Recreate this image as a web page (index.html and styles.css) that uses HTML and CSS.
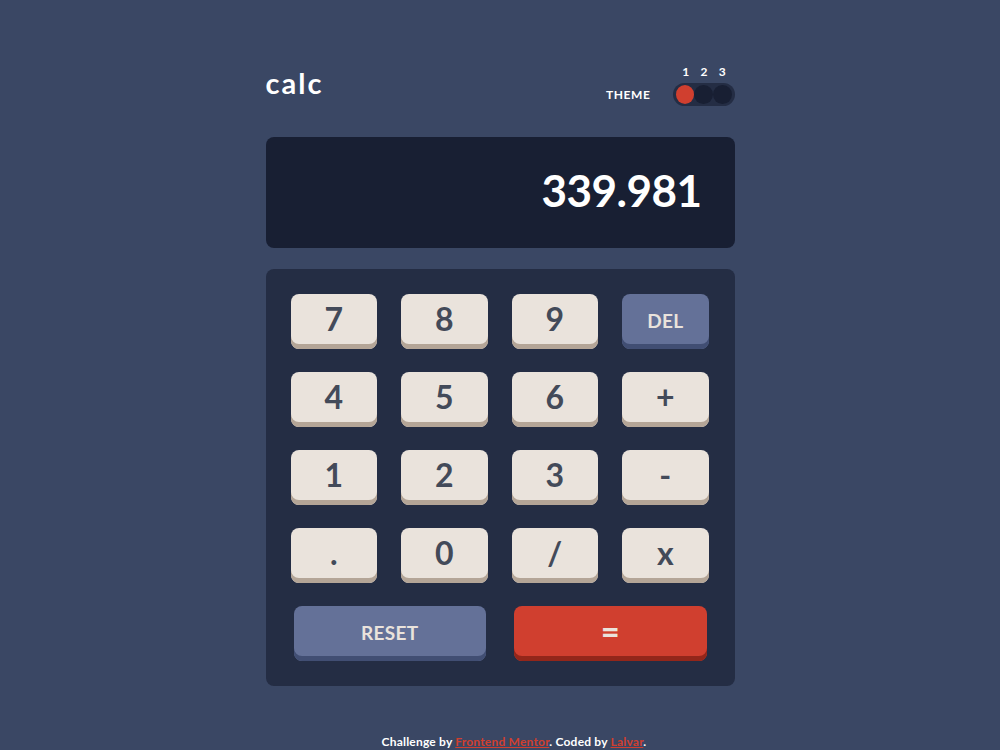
FILE: index.html
```html
<!DOCTYPE html>
<html lang="en">
<head>
<meta charset="UTF-8">
<title>Calculator</title>
<link rel="stylesheet" href="styles.css">
</head>
<body>
<main class="calc">
  <header class="header">
    <h1 class="logo">calc</h1>
    <div class="theme">
      <span class="theme-label">THEME</span>
      <div class="theme-switch">
        <div class="theme-nums"><span>1</span><span>2</span><span>3</span></div>
        <div class="pill">
          <span class="dot active"></span>
          <span class="dot"></span>
          <span class="dot"></span>
        </div>
      </div>
    </div>
  </header>
  <section class="display">339.981</section>
  <section class="keypad">
    <button class="key">7</button>
    <button class="key">8</button>
    <button class="key">9</button>
    <button class="key key-alt small">DEL</button>
    <button class="key">4</button>
    <button class="key">5</button>
    <button class="key">6</button>
    <button class="key">+</button>
    <button class="key">1</button>
    <button class="key">2</button>
    <button class="key">3</button>
    <button class="key">-</button>
    <button class="key">.</button>
    <button class="key">0</button>
    <button class="key">/</button>
    <button class="key">x</button>
    <div class="last-row">
      <button class="key key-alt small">RESET</button>
      <button class="key key-eq">=</button>
    </div>
  </section>
</main>
<footer class="footer">Challenge by <a href="#">Frontend Mentor</a>. Coded by <a href="#">Lalvar</a>.</footer>
</body>
</html>
```

FILE: styles.css
```css
* { box-sizing: border-box; }
html, body { height: 100%; }
body {
  margin: 0;
  background: #3a4764;
  font-family: "Lato", "Noto Sans", sans-serif;
  font-weight: 700;
  color: #ffffff;
  overflow: hidden;
}
.calc {
  width: 469px;
  margin: 0 auto;
  padding-top: 62px;
}
.header {
  display: flex;
  justify-content: space-between;
  align-items: flex-end;
  height: 44px;
}
.logo {
  margin: 0;
  font-size: 29px;
  font-weight: 700;
  line-height: 1;
  padding-bottom: 9px;
  letter-spacing: 2px;
}
.theme {
  display: flex;
  align-items: flex-end;
  gap: 22px;
}
.theme-label {
  font-size: 12px;
  letter-spacing: 0.6px;
  line-height: 1;
  padding-bottom: 5px;
}
.theme-switch {
  display: flex;
  flex-direction: column;
  align-items: flex-end;
  gap: 4px;
}
.theme-nums {
  display: flex;
  width: 60px;
  justify-content: space-around;
  padding: 0 3px 0 2px;
  font-size: 12px;
  line-height: 14px;
}
.pill {
  display: flex;
  width: 62px;
  height: 23px;
  padding: 2px 3px;
  background: #242d44;
  border-radius: 12px;
}
.dot {
  width: 19px;
  height: 19px;
  border-radius: 50%;
  background: #181f33;
}
.dot.active { background: #d03f2f; }
.display {
  margin-top: 31px;
  height: 111px;
  background: #181f33;
  border-radius: 8px;
  display: flex;
  align-items: center;
  justify-content: flex-end;
  padding: 0 33px 6px;
  font-size: 44px;
  letter-spacing: -0.5px;
}
.keypad {
  margin-top: 21px;
  background: #242d44;
  border-radius: 8px;
  padding: 25px 26px 25px 25px;
  display: grid;
  grid-template-columns: repeat(4, 1fr);
  column-gap: 24px;
  row-gap: 23px;
}
.key {
  height: 55px;
  border: none;
  border-radius: 8px;
  background: #eae3dc;
  box-shadow: inset 0 -5px 0 #b4a597;
  color: #434a59;
  font-family: inherit;
  font-weight: 700;
  font-size: 32px;
  line-height: 1;
  padding: 0 0 6px;
  cursor: pointer;
}
.key.small { font-size: 19px; letter-spacing: 0.3px; padding-bottom: 3px; }
.key-alt {
  background: #647198;
  box-shadow: inset 0 -5px 0 #414e73;
  color: #eae3dc;
}
.key-eq {
  background: #d03f2f;
  box-shadow: inset 0 -5px 0 #93261a;
  color: #eae3dc;
  font-size: 32px;
  font-weight: 900;
}
.last-row {
  grid-column: span 4;
  display: grid;
  grid-template-columns: 1fr 1fr;
  gap: 28px;
  padding: 0 2px 0 3px;
}
.footer {
  position: absolute;
  left: 0;
  right: 0;
  top: 735px;
  text-align: center;
  padding-left: 28px;
  font-size: 12px;
  letter-spacing: 0.2px;
  line-height: 14px;
}
.footer a { color: #d03f2f; }
```
